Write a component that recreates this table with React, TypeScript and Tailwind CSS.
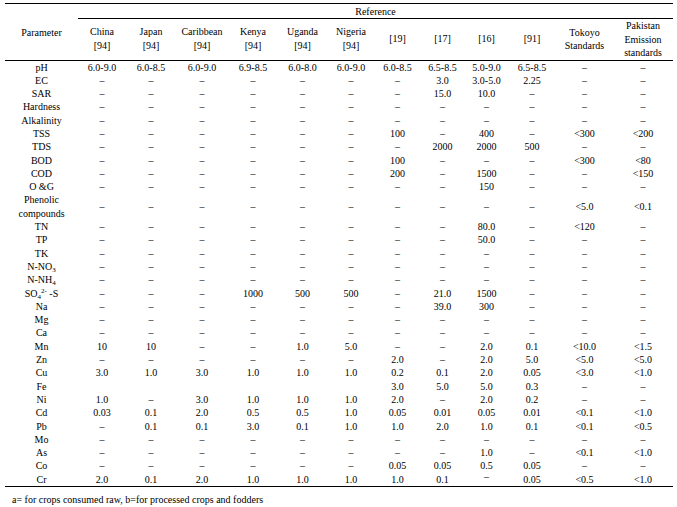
import React from "react";

const D = "–";
const R = "RAISED";

type Row = { p: React.ReactNode; v: string[]; tall?: boolean };

const rows: Row[] = [
  { p: "pH", v: ["6.0-9.0", "6.0-8.5", "6.0-9.0", "6.9-8.5", "6.0-8.0", "6.0-9.0", "6.0-8.5", "6.5-8.5", "5.0-9.0", "6.5-8.5", D, D] },
  { p: "EC", v: [D, D, D, D, D, D, D, "3.0", "3.0-5.0", "2.25", D, D] },
  { p: "SAR", v: [D, D, D, D, D, D, D, "15.0", "10.0", D, D, D] },
  { p: "Hardness", v: [D, D, D, D, D, D, D, D, D, D, D, D] },
  { p: "Alkalinity", v: [D, D, D, D, D, D, D, D, D, D, D, D] },
  { p: "TSS", v: [D, D, D, D, D, D, "100", D, "400", D, "<300", "<200"] },
  { p: "TDS", v: [D, D, D, D, D, D, D, "2000", "2000", "500", D, D] },
  { p: "BOD", v: [D, D, D, D, D, D, "100", D, D, D, "<300", "<80"] },
  { p: "COD", v: [D, D, D, D, D, D, "200", D, "1500", D, D, "<150"] },
  { p: "O &G", v: [D, D, D, D, D, D, D, D, "150", D, D, D] },
  {
    p: (
      <>
        Phenolic
        <br />
        compounds
      </>
    ),
    v: [D, D, D, D, D, D, D, D, D, D, "<5.0", "<0.1"],
    tall: true,
  },
  { p: "TN", v: [D, D, D, D, D, D, D, D, "80.0", D, "<120", D] },
  { p: "TP", v: [D, D, D, D, D, D, D, D, "50.0", D, D, D] },
  { p: "TK", v: [D, D, D, D, D, D, D, D, D, D, D, D] },
  {
    p: (
      <>
        N-NO<sub className="text-[7px] align-baseline relative top-[2px]">3</sub>
      </>
    ),
    v: [D, D, D, D, D, D, D, D, D, D, D, D],
  },
  {
    p: (
      <>
        N-NH<sub className="text-[7px] align-baseline relative top-[2px]">4</sub>
      </>
    ),
    v: [D, D, D, D, D, D, D, D, D, D, D, D],
  },
  {
    p: (
      <>
        SO<sub className="text-[7px] align-baseline relative top-[2px]">4</sub>
        <sup className="text-[7px] align-baseline relative -top-[4px]">2-</sup> -S
      </>
    ),
    v: [D, D, D, "1000", "500", "500", D, "21.0", "1500", D, D, D],
  },
  { p: "Na", v: [D, D, D, D, D, D, D, "39.0", "300", D, D, D] },
  { p: "Mg", v: [D, D, D, D, D, D, D, D, D, D, D, D] },
  { p: "Ca", v: [D, D, D, D, D, D, D, D, D, D, D, D] },
  { p: "Mn", v: ["10", "10", D, D, "1.0", "5.0", D, D, "2.0", "0.1", "<10.0", "<1.5"] },
  { p: "Zn", v: [D, D, D, D, D, D, "2.0", D, "2.0", "5.0", "<5.0", "<5.0"] },
  { p: "Cu", v: ["3.0", "1.0", "3.0", "1.0", "1.0", "1.0", "0.2", "0.1", "2.0", "0.05", "<3.0", "<1.0"] },
  { p: "Fe", v: ["", "", "", "", "", "", "3.0", "5.0", "5.0", "0.3", D, D] },
  { p: "Ni", v: ["1.0", D, "3.0", "1.0", "1.0", "1.0", "2.0", D, "2.0", "0.2", D, D] },
  { p: "Cd", v: ["0.03", "0.1", "2.0", "0.5", "0.5", "1.0", "0.05", "0.01", "0.05", "0.01", "<0.1", "<1.0"] },
  { p: "Pb", v: [D, "0.1", "0.1", "3.0", "0.1", "1.0", "1.0", "2.0", "1.0", "0.1", "<0.1", "<0.5"] },
  { p: "Mo", v: [D, D, D, D, D, D, D, D, D, D, D, D] },
  { p: "As", v: [D, D, D, D, D, D, D, D, "1.0", D, "<0.1", "<1.0"] },
  { p: "Co", v: [D, D, D, D, D, D, "0.05", "0.05", "0.5", "0.05", D, D] },
  { p: "Cr", v: ["2.0", "0.1", "2.0", "1.0", "1.0", "1.0", "1.0", "0.1", R, "0.05", "<0.5", "<1.0"] },
];

const widths = [73, 48, 50, 52, 50, 49, 48, 45, 45, 43, 48, 57, 60];

function Cell({ v }: { v: string }) {
  if (v === R) {
    return <span className="relative -top-[3px] leading-[8px] inline-block">{D}</span>;
  }
  return <>{v}</>;
}

export default function App() {
  return (
    <div
      className="w-[677px] h-[507px] bg-white text-black text-[10px] pt-[3px] pl-[5px]"
      style={{ fontFamily: '"Liberation Serif", "Times New Roman", serif' }}
    >
      <table className="table-fixed border-collapse w-[668px] text-center">
        <colgroup>
          {widths.map((w, i) => (
            <col key={i} style={{ width: w }} />
          ))}
        </colgroup>
        <thead>
          <tr className="h-[15px]">
            <th
              rowSpan={2}
              className="font-normal border-t-[1.5px] border-b border-black align-middle leading-[13px] pt-[2px]"
            >
              Parameter
            </th>
            <th colSpan={12} className="font-normal border-t-[1.5px] border-b border-black leading-[13px] align-middle">
              Reference
            </th>
          </tr>
          <tr className="h-[40px]">
            <th className="font-normal leading-[14px] border-b border-black">
              China
              <br />
              [94]
            </th>
            <th className="font-normal leading-[14px] border-b border-black">
              Japan
              <br />
              [94]
            </th>
            <th className="font-normal leading-[14px] border-b border-black">
              Caribbean
              <br />
              [94]
            </th>
            <th className="font-normal leading-[14px] border-b border-black">
              Kenya
              <br />
              [94]
            </th>
            <th className="font-normal leading-[14px] border-b border-black">
              Uganda
              <br />
              [94]
            </th>
            <th className="font-normal leading-[14px] border-b border-black">
              Nigeria
              <br />
              [94]
            </th>
            <th className="font-normal leading-[14px] border-b border-black">[19]</th>
            <th className="font-normal leading-[14px] border-b border-black">[17]</th>
            <th className="font-normal leading-[14px] border-b border-black">[16]</th>
            <th className="font-normal leading-[14px] border-b border-black">[91]</th>
            <th className="font-normal leading-[13px] border-b border-black">
              Tokoyo
              <br />
              Standards
            </th>
            <th className="font-normal leading-[13.5px] border-b border-black">
              Pakistan
              <br />
              Emission
              <br />
              standards
            </th>
          </tr>
        </thead>
        <tbody className="border-b-[1.5px] border-black">
          {rows.map((r, i) => (
            <tr key={i}>
              <td className="p-0 leading-[13.3px] whitespace-nowrap">{r.p}</td>
              {r.v.map((v, j) => (
                <td key={j} className="p-0 leading-[13.3px] whitespace-nowrap">
                  <Cell v={v} />
                </td>
              ))}
            </tr>
          ))}
        </tbody>
      </table>
      <div className="pl-[7px] pt-[6px] leading-[13px]">
        a= for crops consumed raw, b=for processed crops and fodders
      </div>
    </div>
  );
}
